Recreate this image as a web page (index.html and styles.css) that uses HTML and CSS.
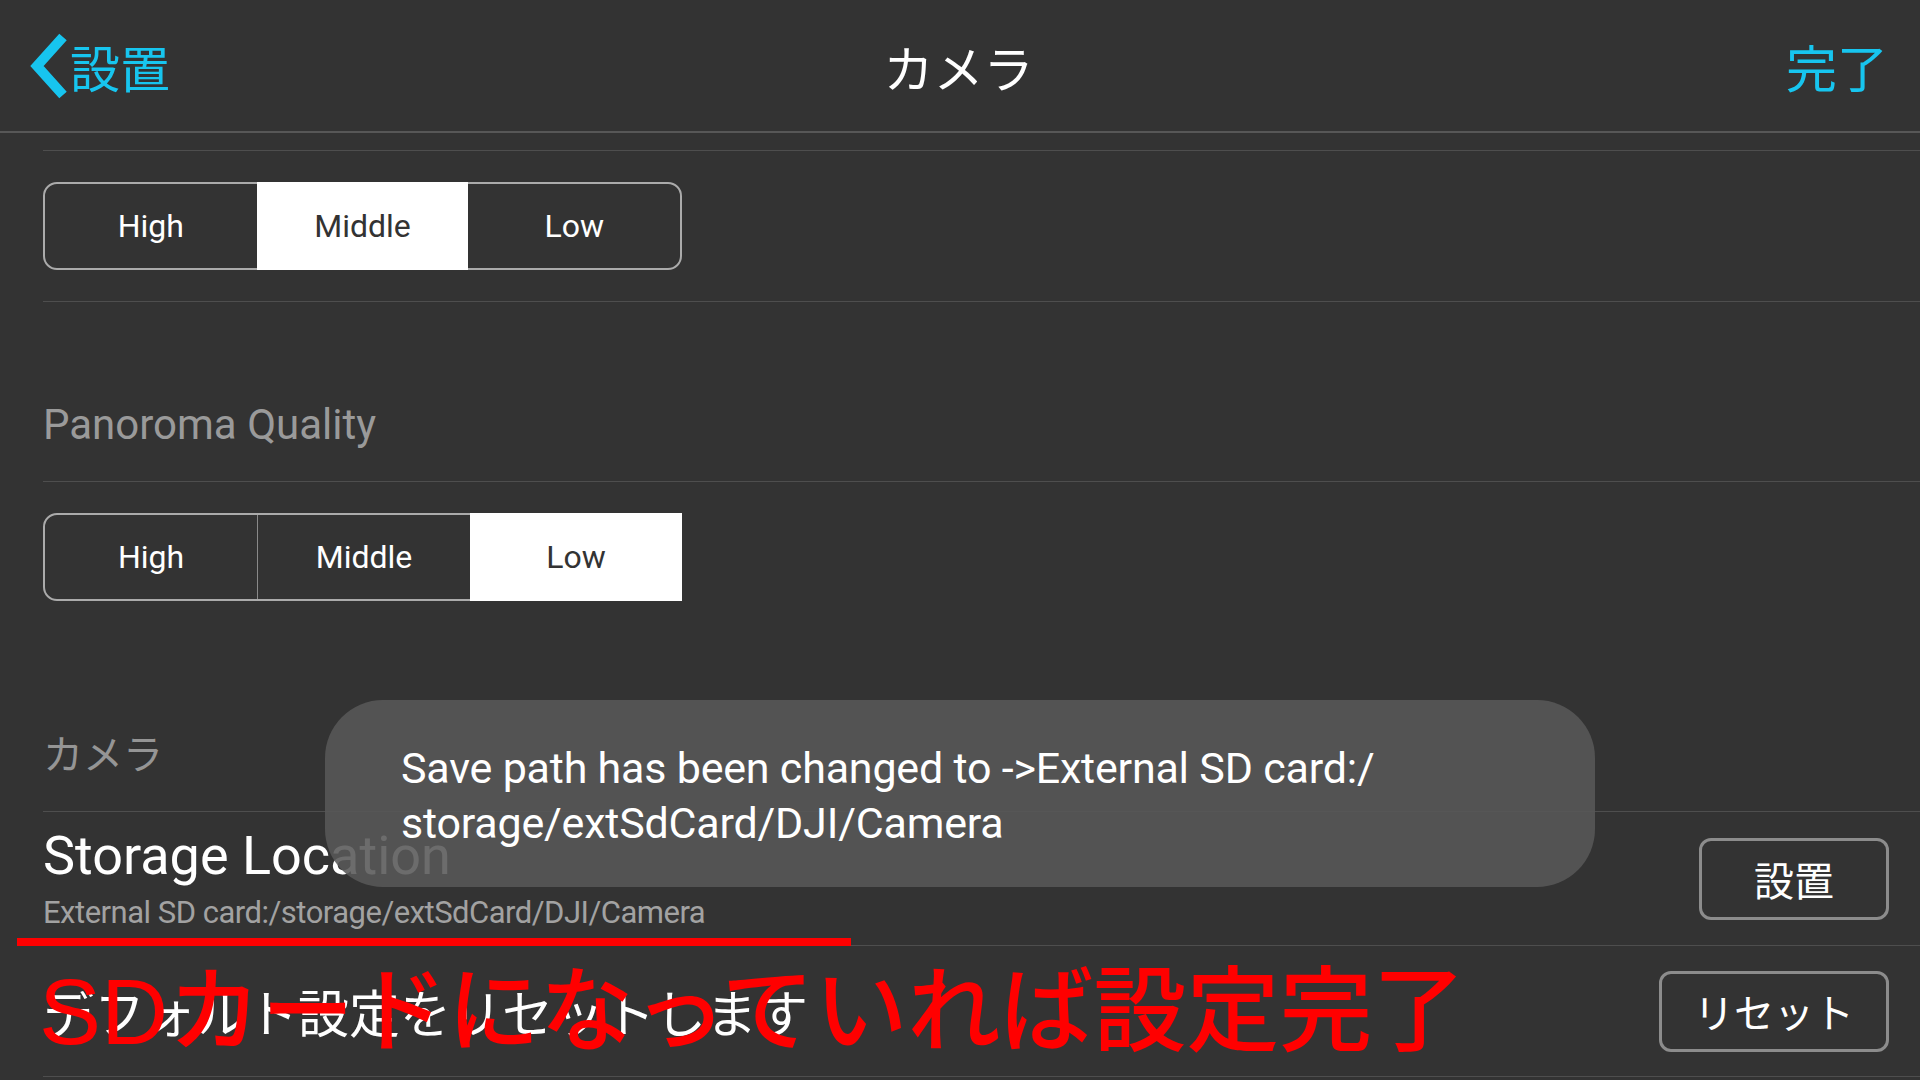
FILE: index.html
```html
<!DOCTYPE html>
<html lang="ja">
<head>
  <meta charset="UTF-8">
  <meta name="viewport" content="width=device-width, initial-scale=1.0">
  <title>カメラ設定</title>
  <link rel="stylesheet" href="styles.css">
</head>
<body>

  <!-- ヘッダー -->
  <header class="topbar">
    <a class="back">
      <svg class="back-icon" width="40" height="66" viewBox="0 0 40 66">
        <polyline points="34,4 8,33 34,62" fill="none" stroke="#17c5ef" stroke-width="10" />
      </svg>
      <span>設置</span>
    </a>
    <h1 class="title">カメラ</h1>
    <a class="done">完了</a>
  </header>

  <!-- 設定リスト -->
  <main class="settings">
    <div class="row row-cut"></div>

    <div class="row row-seg">
      <div class="segmented">
        <span class="seg">High</span>
        <span class="seg is-active">Middle</span>
        <span class="seg">Low</span>
      </div>
    </div>

    <div class="row row-label">
      <span class="section-title">Panoroma Quality</span>
    </div>

    <div class="row row-seg no-line">
      <div class="segmented">
        <span class="seg">High</span>
        <span class="seg">Middle</span>
        <span class="seg is-active">Low</span>
      </div>
    </div>

    <div class="row row-label">
      <span class="section-title jp">カメラ</span>
    </div>

    <div class="row row-item storage">
      <div class="item-text">
        <div class="item-title">Storage Location</div>
        <div class="item-sub">External SD card:/storage/extSdCard/DJI/Camera</div>
      </div>
      <button class="outline-btn btn-set">設置</button>
    </div>

    <div class="row row-item reset">
      <div class="item-title jp">デフォルト設定をリセットします</div>
      <button class="outline-btn btn-reset">リセット</button>
    </div>
  </main>

  <!-- トースト -->
  <div class="toast">Save path has been changed to -&gt;External SD card:/<br>storage/extSdCard/DJI/Camera</div>

  <!-- 赤い注釈 -->
  <div class="note-line"></div>
  <div class="note">SDカードになっていれば設定完了</div>

</body>
</html>
```

FILE: styles.css
```css
body {
  font-family: Roboto, "Noto Sans CJK JP", sans-serif;
  background-color: #333333;
  color: #ffffff;
  margin: 0;
  padding: 0;
  width: 1920px;
  height: 1080px;
  overflow: hidden;
  position: relative;
}

/* ヘッダー */
.topbar {
  height: 131px;
  border-bottom: 2px solid #575757;
  display: grid;
  grid-template-columns: 1fr auto 1fr;
  align-items: center;
  padding: 0 32px 0 29px;
}

.back {
  display: flex;
  align-items: center;
  gap: 1px;
  color: #17c5ef;
  font-family: "Noto Sans CJK JP", sans-serif;
  font-size: 50px;
  line-height: 60px;
}

.back-icon {
  display: block;
}

.title {
  margin: 0;
  font-family: "Noto Sans CJK JP", sans-serif;
  font-size: 50px;
  font-weight: normal;
  line-height: 60px;
}

.done {
  justify-self: end;
  color: #17c5ef;
  font-family: "Noto Sans CJK JP", sans-serif;
  font-size: 51px;
  line-height: 60px;
}

/* 設定リスト */
.settings {
  padding-left: 43px;
}

.row {
  border-bottom: 1px solid #4e4e4e;
  display: flex;
  align-items: center;
}

.row.no-line {
  border-bottom: none;
}

.row-cut {
  height: 17px;
}

.row-seg {
  height: 150px;
}

.row-label {
  height: 179px;
  align-items: flex-end;
}

.section-title {
  font-size: 42px;
  line-height: 48px;
  color: #9a9a9a;
  padding-bottom: 32px;
}

.section-title.jp {
  font-family: "Noto Sans CJK JP", sans-serif;
  font-size: 40px;
  line-height: 48px;
  padding-bottom: 35px;
  color: #959595;
}

/* セグメント */
.segmented {
  display: flex;
  width: 639px;
  height: 88px;
  box-sizing: border-box;
  border: 2px solid #ababab;
  border-radius: 14px;
}

.seg {
  flex: 1;
  display: flex;
  align-items: center;
  justify-content: center;
  font-size: 32px;
  border-left: 1px solid #8a8a8a;
}

.seg:first-child {
  border-left: none;
}

.seg.is-active {
  background-color: #ffffff;
  color: #333333;
  border-left: none;
  margin: -2px 0;
}

.seg.is-active:last-child {
  margin-right: -2px;
}

.seg.is-active + .seg {
  border-left: none;
}

/* 項目 */
.row-item {
  justify-content: space-between;
  padding-right: 31px;
}

.storage {
  height: 133px;
}

.reset {
  height: 130px;
}

.item-title {
  font-size: 54px;
  line-height: 62px;
}

.item-title.jp {
  font-family: "Noto Sans CJK JP", sans-serif;
  font-size: 51px;
  line-height: 60px;
}

.item-sub {
  font-size: 31px;
  line-height: 40px;
  letter-spacing: -0.5px;
  color: #a2a2a2;
  margin-top: 6px;
}

.outline-btn {
  background: transparent;
  color: #ffffff;
  border: 3px solid #8c8c8c;
  border-radius: 12px;
  font-family: "Noto Sans CJK JP", sans-serif;
  font-size: 40px;
  height: 82px;
  padding: 0;
}

.btn-set {
  width: 190px;
}

.btn-reset {
  width: 230px;
  height: 81px;
}

/* トースト */
.toast {
  position: absolute;
  left: 325px;
  top: 700px;
  width: 1270px;
  height: 187px;
  box-sizing: border-box;
  padding: 41px 0 0 76px;
  background-color: rgba(88, 88, 88, 0.88);
  border-radius: 58px;
  font-size: 43px;
  line-height: 55px;
  letter-spacing: -0.2px;
  color: #ffffff;
}

/* 注釈 */
.note-line {
  position: absolute;
  left: 17px;
  top: 938px;
  width: 834px;
  height: 8px;
  background-color: #ff0000;
}

.note {
  position: absolute;
  left: 39px;
  top: 966px;
  font-family: "Liberation Sans", "Noto Sans CJK JP", sans-serif;
  font-size: 93px;
  font-weight: 500;
  line-height: 93px;
  color: #ff0000;
  white-space: nowrap;
}
```
